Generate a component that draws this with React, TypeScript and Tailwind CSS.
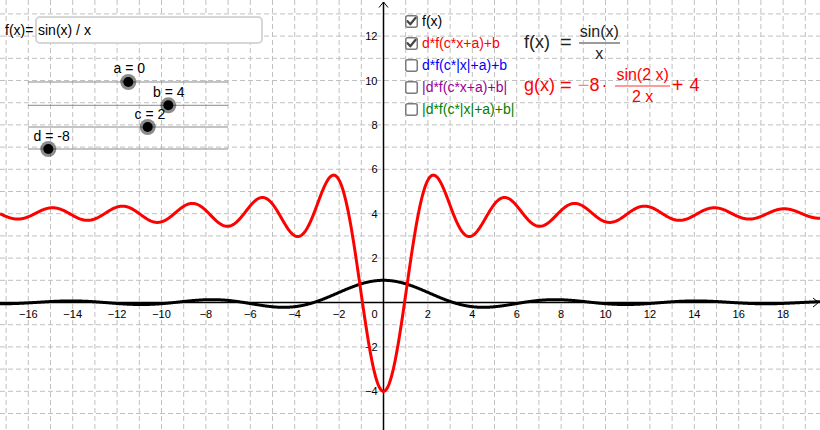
import type { ReactNode } from 'react';

const W = 820;
const H = 430;
const OX = 383.5;
const OY = 302.5;
const S = 22.2;

const toPx = (x: number) => OX + x * S;
const toPy = (y: number) => OY - y * S;
const sinc = (t: number) => (t === 0 ? 1 : Math.sin(t) / t);

const f = (x: number) => sinc(x);
const g = (x: number) => -8 * sinc(2 * x) + 4;

function curvePath(fn: (x: number) => number) {
  let d = '';
  for (let i = 0; i <= W * 2; i++) {
    const X = i / 2;
    const Y = toPy(fn((X - OX) / S));
    d += `${i ? 'L' : 'M'}${X.toFixed(2)} ${Y.toFixed(2)}`;
  }
  return d;
}

const fmt = (n: number) => (n < 0 ? `\u2212${Math.abs(n)}` : String(n));

const SLIDERS = [
  { label: 'a = 0', lx: 113.5, ly: 73, y: 82, px: 128.3 },
  { label: 'b = 4', lx: 153, ly: 96.5, y: 105.3, px: 168.3 },
  { label: 'c = 2', lx: 134.5, ly: 119, y: 127, px: 147.7 },
  { label: 'd = -8', lx: 33.5, ly: 141, y: 149, px: 48.3 },
];

const CHECKS = [
  { text: 'f(x)', checked: true, color: 'text-black' },
  { text: 'd*f(c*x+a)+b', checked: true, color: 'text-[#ff0000]' },
  { text: 'd*f(c*|x|+a)+b', checked: false, color: 'text-[#0000ff]' },
  { text: '|d*f(c*x+a)+b|', checked: false, color: 'text-[#990099]' },
  { text: '|d*f(c*|x|+a)+b|', checked: false, color: 'text-[#008000]' },
];

function Graph() {
  const vLines: number[] = [];
  for (let k = -17; k <= 19; k++) if (k !== 0) vLines.push(toPx(k));
  const hLines: number[] = [];
  for (let k = -5; k <= 13; k++) if (k !== 0) hLines.push(toPy(k));
  const xTicks: number[] = [];
  for (let k = -16; k <= 18; k += 2) if (k !== 0) xTicks.push(k);
  const yTicks: number[] = [];
  for (let k = -4; k <= 12; k += 2) if (k !== 0) yTicks.push(k);

  return (
    <svg className="absolute inset-0" width={W} height={H} viewBox={`0 0 ${W} ${H}`}>
      <g stroke="#c0c0c0" strokeWidth={1} strokeDasharray="5 3">
        {vLines.map((x) => (
          <line key={`v${x}`} x1={x} y1={0} x2={x} y2={H} />
        ))}
        {hLines.map((y) => (
          <line key={`h${y}`} x1={0} y1={y} x2={W} y2={y} />
        ))}
      </g>

      {/* axes */}
      <g stroke="#000" strokeWidth={1.5} fill="none">
        <line x1={0} y1={OY} x2={818} y2={OY} />
        <polyline points={`813,${OY - 4.5} 818.5,${OY} 813,${OY + 4.5}`} strokeWidth={1} />
        <line x1={OX} y1={H} x2={OX} y2={2} />
        <polyline points={`${OX - 4.5},7.5 ${OX},2 ${OX + 4.5},7.5`} strokeWidth={1} />
      </g>

      <g fontFamily="'Liberation Sans', Arial, sans-serif" fontSize={11} fill="#000">
        {xTicks.map((k) => (
          <text key={`x${k}`} x={toPx(k)} y={317.5} textAnchor="middle">
            {fmt(k)}
          </text>
        ))}
        {yTicks.map((k) => (
          <text key={`y${k}`} x={377.5} y={toPy(k) + 4} textAnchor="end">
            {fmt(k)}
          </text>
        ))}
        <text x={377.5} y={317.5} textAnchor="end">
          0
        </text>
      </g>

      <path d={curvePath(f)} stroke="#000" strokeWidth={3} fill="none" strokeLinejoin="round" />
      <path d={curvePath(g)} stroke="#ff0000" strokeWidth={3} fill="none" strokeLinejoin="round" />

      {/* sliders */}
      {SLIDERS.map((s) => (
        <g key={s.label}>
          <line x1={28} y1={s.y} x2={228} y2={s.y} stroke="#8a8a8a" strokeWidth={1} />
          <circle cx={s.px} cy={s.y} r={8} fill="#000" fillOpacity={0.45} />
          <circle cx={s.px} cy={s.y} r={5} fill="#000" />
          <text x={s.lx} y={s.ly} fontFamily="'Liberation Sans', Arial, sans-serif" fontSize={14} fill="#000">
            {s.label}
          </text>
        </g>
      ))}
    </svg>
  );
}

function CheckBox({ checked }: { checked: boolean }) {
  return (
    <svg width={13} height={13} viewBox="0 0 13 13" className="shrink-0">
      <rect x={0.75} y={0.75} width={11.5} height={11.5} rx={2} fill="#fff" stroke="#7a7a7a" strokeWidth={1.5} />
      {checked && (
        <path d="M2.6 6.2 L5.3 9.3 L10.6 2.8" fill="none" stroke="#454545" strokeWidth={2.2} strokeLinecap="round" strokeLinejoin="round" />
      )}
    </svg>
  );
}

function Frac({ num, den, bar }: { num: ReactNode; den: ReactNode; bar: string }) {
  return (
    <span className="inline-flex flex-col items-center">
      <span className="px-[1px] pb-[1px] text-[16px] leading-[18px]">{num}</span>
      <span className={`h-[2px] self-stretch ${bar}`} />
      <span className="pt-[1px] text-[16px] leading-[18px]">{den}</span>
    </span>
  );
}

export default function App() {
  return (
    <div className="relative h-[430px] w-[820px] overflow-hidden bg-white font-['Liberation_Sans',Arial,sans-serif]">
      <Graph />

      {/* input bar */}
      <div className="absolute left-[5px] top-[16px] flex h-[28px] items-center text-[14px] text-black">f(x)=</div>
      <div className="absolute left-[35px] top-[16px] flex h-[28px] w-[228px] items-center rounded-[5px] border-2 border-[#d6d6d6] bg-white pl-[1px] text-[14px] text-black">
        sin(x) / x
      </div>

      {/* checkboxes */}
      <div className="absolute left-[405px] top-[10px] flex flex-col">
        {CHECKS.map((c) => (
          <div key={c.text} className="flex h-[22px] items-center gap-[4px]">
            <CheckBox checked={c.checked} />
            <span className={`text-[14px] leading-none ${c.color}`}>{c.text}</span>
          </div>
        ))}
      </div>

      {/* formulas */}
      <div className="absolute left-[524px] top-[21px] flex items-center text-[18px] leading-[20px] text-[#222]">
        <span>f(x)</span>
        <span className="ml-[10px] text-[20px]">=</span>
        <span className="ml-[7px]">
          <Frac num="sin(x)" den="x" bar="bg-[#9a9a9a]" />
        </span>
      </div>

      <div className="absolute left-[524px] top-[64px] flex items-center text-[18px] leading-[20px] text-[#ff0000]">
        <span>g(x)</span>
        <span className="ml-[5px] text-[20px]">=</span>
        <span className="ml-[6px] text-[20px] text-[#ff8080]">{'\u2212'}</span>
        <span>8</span>
        <span className="ml-[2px]">·</span>
        <span className="ml-[8px]">
          <Frac num="sin(2 x)" den="2 x" bar="bg-[#ff9a9a]" />
        </span>
        <span className="ml-[2px] text-[20px]">+</span>
        <span className="ml-[6px]">4</span>
      </div>
    </div>
  );
}
